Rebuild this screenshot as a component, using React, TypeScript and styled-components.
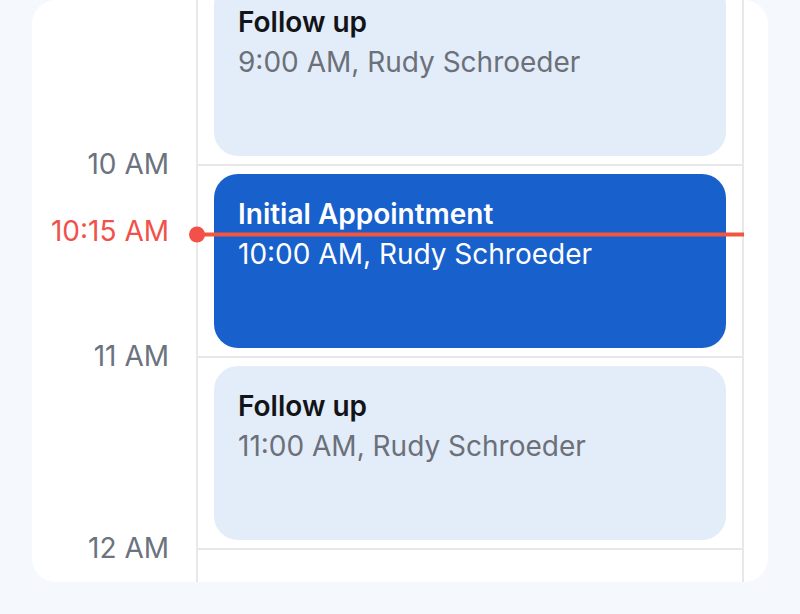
import styled, { createGlobalStyle } from "styled-components";

const GlobalStyle = createGlobalStyle`
    html, body {
        margin: 0;
        padding: 0;
        background: #f5f8fd;
        font-family: Inter, "Noto Sans", sans-serif;
    }
`;

const Page = styled.div`
    height: 614px;
    padding: 0 32px 32px;
    box-sizing: border-box;
`;

const Card = styled.div`
    position: relative;
    height: 582px;
    background: #ffffff;
    border-radius: 24px;
    padding-right: 24px;
    overflow: hidden;
`;

const Timeline = styled.div`
    margin-top: -28px;
`;

const HourRow = styled.div`
    position: relative;
    display: grid;
    grid-template-columns: 164px 1fr;
`;

const TimeLabel = styled.div<{ $now?: boolean }>`
    margin-top: ${(p) => (p.$now ? "0" : "-20px")};
    padding-right: 27px;
    text-align: right;
    font-size: 28px;
    line-height: 40px;
    color: ${(p) => (p.$now ? "#f1514a" : "#6b7280")};
    white-space: nowrap;
`;

const Slot = styled.div`
    height: 192px;
    box-sizing: border-box;
    border-top: 2px solid #e8e8ea;
    border-left: 2px solid #e8e8ea;
    border-right: 2px solid #e8e8ea;
    padding: 8px 16px;
`;

const Event = styled.div<{ $active?: boolean }>`
    height: 174px;
    box-sizing: border-box;
    padding: 20px 24px;
    border-radius: 24px;
    background: ${(p) => (p.$active ? "#1860cc" : "#e3edf9")};
    font-size: 28px;
    line-height: 40px;
`;

const EventTitle = styled.div<{ $active?: boolean }>`
    font-weight: 600;
    color: ${(p) => (p.$active ? "#ffffff" : "#121417")};
`;

const EventMeta = styled.div<{ $active?: boolean }>`
    color: ${(p) => (p.$active ? "#ffffff" : "#6b7079")};
`;

const NowIndicator = styled.div`
    position: absolute;
    left: 0;
    right: 0;
    top: 70px;
    transform: translateY(-50%);
    display: grid;
    grid-template-columns: 164px 1fr;
    align-items: center;
    z-index: 2;

    ${TimeLabel} {
        margin-bottom: 7px;
    }
`;

const NowLine = styled.div`
    position: relative;
    height: 4px;
    background: #f2563f;

    &::before {
        content: "";
        position: absolute;
        left: -7px;
        top: 50%;
        width: 16px;
        height: 16px;
        margin-top: -8px;
        border-radius: 50%;
        background: #f4504a;
    }
`;

// first row is scrolled above the card, so its hour label stays empty
const hours = [
    { key: "9", label: "", title: "Follow up", meta: "9:00 AM, Rudy Schroeder" },
    { key: "10", label: "10 AM", title: "Initial Appointment", meta: "10:00 AM, Rudy Schroeder", active: true, now: "10:15 AM" },
    { key: "11", label: "11 AM", title: "Follow up", meta: "11:00 AM, Rudy Schroeder" },
    { key: "12", label: "12 AM" },
];

export default function App() {
    return (
        <>
            <GlobalStyle />
            <Page>
                <Card>
                    <Timeline>
                        {hours.map((h) => (
                            <HourRow key={h.key}>
                                <TimeLabel>{h.label}</TimeLabel>
                                <Slot>
                                    {h.title && (
                                        <Event $active={h.active}>
                                            <EventTitle $active={h.active}>{h.title}</EventTitle>
                                            <EventMeta $active={h.active}>{h.meta}</EventMeta>
                                        </Event>
                                    )}
                                </Slot>
                                {h.now && (
                                    <NowIndicator>
                                        <TimeLabel $now>{h.now}</TimeLabel>
                                        <NowLine />
                                    </NowIndicator>
                                )}
                            </HourRow>
                        ))}
                    </Timeline>
                </Card>
            </Page>
        </>
    );
}
